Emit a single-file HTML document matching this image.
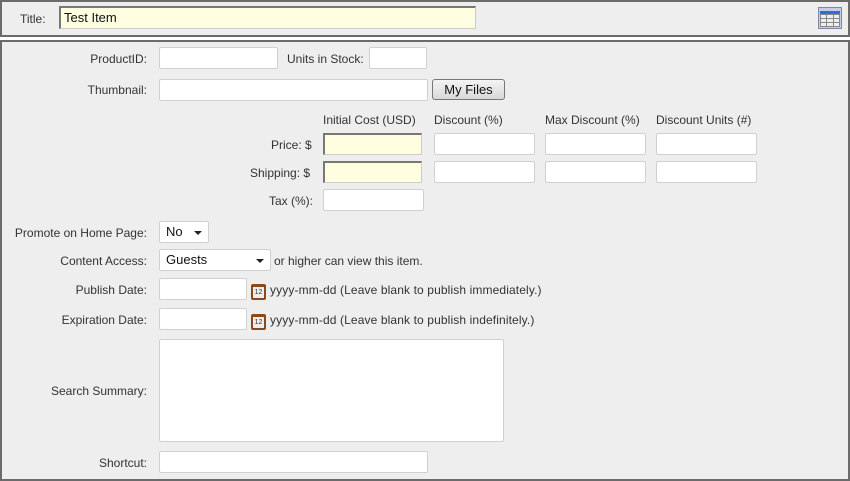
<!DOCTYPE html>
<html><head><style>
*{box-sizing:border-box;margin:0;padding:0}
body{width:850px;height:479px;background:#fff;font-family:"Liberation Sans",Arial,sans-serif;font-size:12px;color:#333;position:relative;overflow:hidden}
.p{position:absolute;background:#eeeeee;border:2px solid #6b6b6b}
.a{position:absolute;white-space:nowrap}
.r{position:absolute;text-align:right;white-space:nowrap;right:703px}
.i{position:absolute;background:#fff;border:1px solid #d0d0d0;border-radius:2px}
.y{position:absolute;background:#fffee0;border:1px solid #ccc;border-top:2px solid #777;border-left:2px solid #777}
.cal{position:absolute;width:15px;height:16px;background:#8b4a1c;border-radius:2px}
.cal:after{content:"12";position:absolute;left:2px;top:3px;width:11px;height:11px;background:#eee;font-size:7px;text-align:center;line-height:12px;color:#333}
.sel{position:absolute;background:#fff;border:1px solid #d0d0d0;border-radius:2px;font-size:13px;color:#111;padding:2px 6px}
.sel b{position:absolute;right:6px;top:9px;border-left:4px solid transparent;border-right:4px solid transparent;border-top:4px solid #222}
.d{letter-spacing:0.12px}
</style></head><body>
<div class="p" style="left:0;top:0;width:850px;height:37px"></div>
<div class="a" style="left:20px;top:12px">Title:</div>
<div class="y" style="left:59px;top:6px;width:417px;height:23px;font-size:13px;color:#111;padding:2px 3px">Test Item</div>
<svg class="a" style="left:818px;top:7px" width="24" height="22" viewBox="0 0 24 22"><rect x="0.5" y="0.5" width="23" height="21" fill="#c4cde8" stroke="#7a88b0"/><rect x="2" y="4" width="20" height="3" fill="#2f6fd0"/><g stroke="#888" fill="#eee"><rect x="2.5" y="7.5" width="19" height="12"/><line x1="2" y1="11.5" x2="22" y2="11.5"/><line x1="2" y1="15.5" x2="22" y2="15.5"/><line x1="8.5" y1="7" x2="8.5" y2="20"/><line x1="15.5" y1="7" x2="15.5" y2="20"/></g></svg>
<div class="p" style="left:0;top:40px;width:850px;height:441px"></div>

<div class="r" style="top:52px">ProductID:</div>
<div class="i" style="left:159px;top:47px;width:119px;height:22px"></div>
<div class="a" style="left:287px;top:52px">Units in Stock:</div>
<div class="i" style="left:369px;top:47px;width:58px;height:22px"></div>

<div class="r" style="top:83px">Thumbnail:</div>
<div class="i" style="left:159px;top:79px;width:269px;height:22px"></div>
<div class="a" style="left:432px;top:79px;width:73px;height:21px;border:1px solid #777;border-radius:3px;background:linear-gradient(#f4f4f4,#d8d8d8);font-size:13px;color:#111;text-align:center;line-height:19px">My Files</div>

<div class="a" style="left:323px;top:113px">Initial Cost (USD)</div>
<div class="a" style="left:434px;top:113px">Discount (%)</div>
<div class="a" style="left:545px;top:113px">Max Discount (%)</div>
<div class="a" style="left:656px;top:113px">Discount Units (#)</div>

<div class="a" style="left:271px;top:138px">Price: $</div>
<div class="y" style="left:323px;top:133px;width:99px;height:22px"></div>
<div class="i" style="left:434px;top:133px;width:101px;height:22px"></div>
<div class="i" style="left:545px;top:133px;width:101px;height:22px"></div>
<div class="i" style="left:656px;top:133px;width:101px;height:22px"></div>

<div class="a" style="left:250px;top:166px">Shipping: $</div>
<div class="y" style="left:323px;top:161px;width:99px;height:22px"></div>
<div class="i" style="left:434px;top:161px;width:101px;height:22px"></div>
<div class="i" style="left:545px;top:161px;width:101px;height:22px"></div>
<div class="i" style="left:656px;top:161px;width:101px;height:22px"></div>

<div class="a" style="left:269px;top:194px">Tax (%):</div>
<div class="i" style="left:323px;top:189px;width:101px;height:22px"></div>

<div class="r" style="top:226px">Promote on Home Page:</div>
<div class="sel" style="left:159px;top:221px;width:50px;height:22px">No<b></b></div>

<div class="r" style="top:254px">Content Access:</div>
<div class="sel" style="left:159px;top:249px;width:112px;height:22px">Guests<b></b></div>
<div class="a" style="left:274px;top:254px">or higher can view this item.</div>

<div class="r" style="top:283px">Publish Date:</div>
<div class="i" style="left:159px;top:278px;width:88px;height:22px"></div>
<div class="cal" style="left:251px;top:284px"></div>
<div class="a d" style="left:270px;top:283px">yyyy-mm-dd (Leave blank to publish immediately.)</div>

<div class="r" style="top:313px">Expiration Date:</div>
<div class="i" style="left:159px;top:308px;width:88px;height:22px"></div>
<div class="cal" style="left:251px;top:314px"></div>
<div class="a d" style="left:270px;top:313px">yyyy-mm-dd (Leave blank to publish indefinitely.)</div>

<div class="r" style="top:384px">Search Summary:</div>
<div class="i" style="left:159px;top:339px;width:345px;height:103px"></div>

<div class="r" style="top:456px">Shortcut:</div>
<div class="i" style="left:159px;top:451px;width:269px;height:22px"></div>
</body></html>
